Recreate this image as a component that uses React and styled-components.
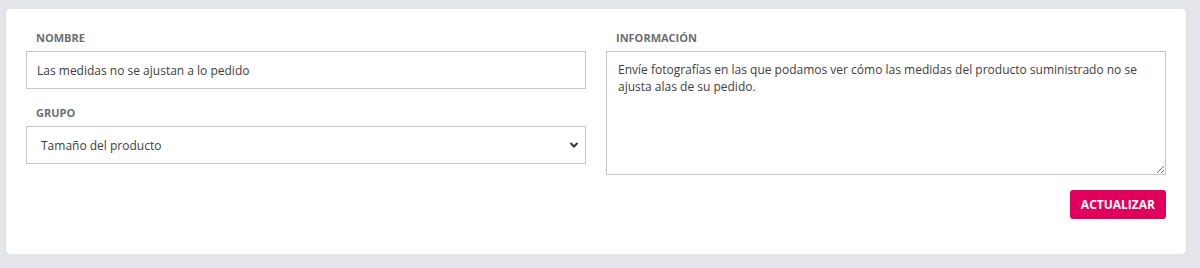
import styled, { createGlobalStyle } from 'styled-components'

const GlobalStyle = createGlobalStyle`
  html, body {
    margin: 0;
    padding: 0;
    background: #e4e5ea;
    font-family: 'Open Sans', 'Liberation Sans', sans-serif;
  }
  body {
    padding: 9px 14px 0 6px;
  }
`

const Card = styled.div`
  background: #ffffff;
  border-radius: 4px;
  box-shadow: 0 1px 2px rgba(0, 0, 0, 0.15);
  padding: 21px 20px 35px 20px;
`

const Grid = styled.div`
  display: grid;
  grid-template-columns: 1fr 1fr;
  column-gap: 20px;
`

const Column = styled.div`
  display: flex;
  flex-direction: column;
`

const Field = styled.div`
  display: flex;
  flex-direction: column;
  margin-bottom: ${p => (p.last ? '0' : '16px')};
`

const Label = styled.label`
  font-size: 11px;
  font-weight: 700;
  color: #6b6e75;
  text-transform: uppercase;
  line-height: 16px;
  padding-left: 10px;
  margin-bottom: 5px;
`

const Input = styled.input`
  box-sizing: border-box;
  height: 38px;
  border: 1px solid #c6c6c6;
  border-radius: 0;
  padding: 0 10px;
  font-family: inherit;
  font-size: 12px;
  color: #3e3e3e;
  outline: none;
`

const SelectWrap = styled.div`
  position: relative;
  height: 38px;
`

const Select = styled.select`
  box-sizing: border-box;
  width: 100%;
  height: 38px;
  border: 1px solid #c6c6c6;
  border-radius: 0;
  background: #fff;
  padding: 0 14px;
  font-family: inherit;
  font-size: 12px;
  color: #3e3e3e;
  appearance: none;
  outline: none;
`

const Chevron = styled.svg`
  position: absolute;
  right: 7px;
  top: 15px;
  pointer-events: none;
`

const TextArea = styled.textarea`
  box-sizing: border-box;
  height: 124px;
  border: 1px solid #c6c6c6;
  border-radius: 0;
  padding: 9px 11px;
  font-family: inherit;
  font-size: 12px;
  line-height: 17px;
  color: #3e3e3e;
  resize: vertical;
  outline: none;
`

const Actions = styled.div`
  display: flex;
  justify-content: flex-end;
  margin-top: 15px;
`

const Button = styled.button`
  height: 29px;
  padding: 0 11px;
  border: none;
  border-radius: 3px;
  background: #e0005b;
  color: #fff;
  font-family: inherit;
  font-size: 12px;
  font-weight: 700;
  cursor: pointer;
`

const App = () => (
  <>
    <GlobalStyle />
    <Card>
      <Grid>
        <Column>
          <Field>
            <Label>Nombre</Label>
            <Input defaultValue='Las medidas no se ajustan a lo pedido' />
          </Field>
          <Field last>
            <Label>Grupo</Label>
            <SelectWrap>
              <Select defaultValue='1'>
                <option value='1'>Tamaño del producto</option>
              </Select>
              <Chevron width='10' height='8' viewBox='0 0 10 8'>
                <path d='M1.5 2 L5 5.5 L8.5 2' fill='none' stroke='#333' strokeWidth='2' />
              </Chevron>
            </SelectWrap>
          </Field>
        </Column>
        <Column>
          <Field last>
            <Label>Información</Label>
            <TextArea defaultValue='Envíe fotografías en las que podamos ver cómo las medidas del producto suministrado no se ajusta alas de su pedido.' />
          </Field>
          <Actions>
            <Button>ACTUALIZAR</Button>
          </Actions>
        </Column>
      </Grid>
    </Card>
  </>
)

export default App
